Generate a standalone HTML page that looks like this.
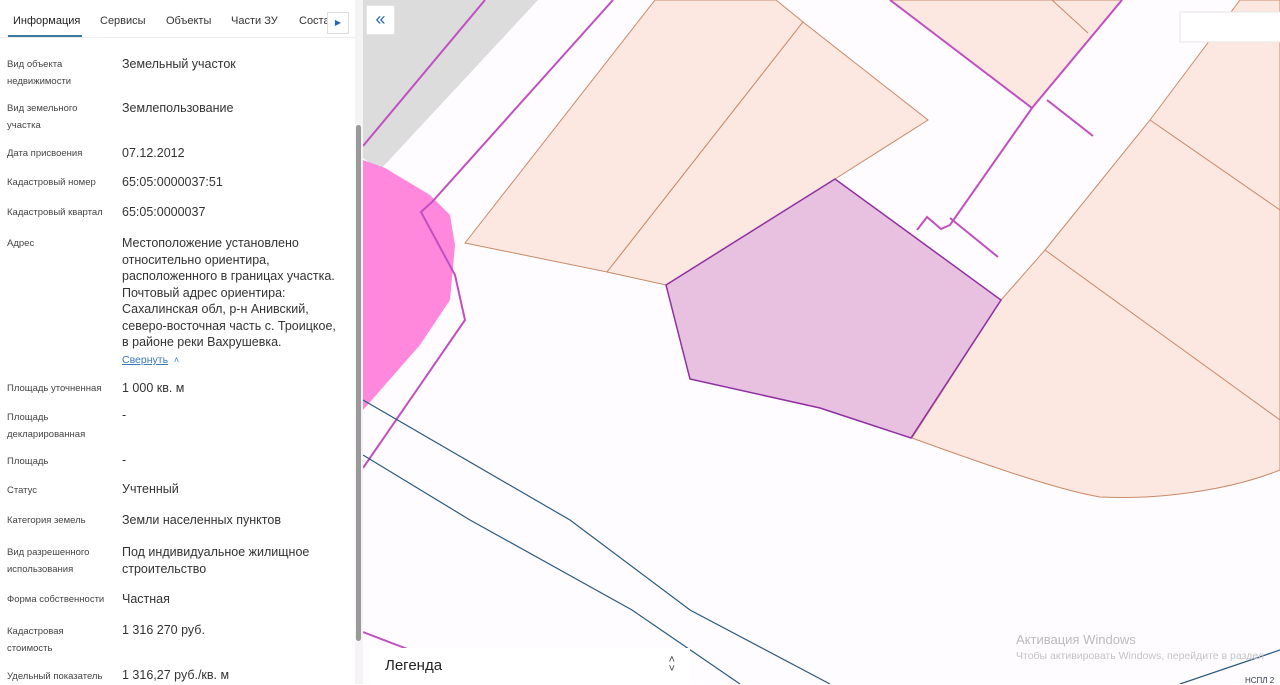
<!DOCTYPE html>
<html><head><meta charset="utf-8"><style>
*{margin:0;padding:0;box-sizing:border-box}
body{width:1280px;height:684px;overflow:hidden;position:relative;background:#fff;font-family:"Liberation Sans",sans-serif}
#panel{position:absolute;left:0;top:0;width:363px;height:684px;background:#fff}
.tab{position:absolute;top:15px;font-size:11px;color:#333}
.l{position:absolute;left:7px;font-size:9.5px;color:#444;line-height:17px}
.v{position:absolute;left:122px;font-size:12.5px;color:#333;line-height:16.5px}
</style></head><body>
<svg style="position:absolute;left:0;top:0" width="1280" height="684">
<rect x="363" y="0" width="917" height="684" fill="#fefcfe"/>
<polygon points="363,0 538,0 380,170 363,158" fill="#dcdcdc"/>
<g fill="#fce8e0" stroke="#c98a6a" stroke-width="1">
<polygon points="465,243 607,272 803,22 776,0 655,0"/>
<polygon points="607,272 666,285 835,179 928,120 803,22"/>
<polygon points="890,0 1032,108 1122,0"/>
<path d="M912,438 L1001,300 L1045,250 L1150,120 L1240,0 L1280,0 L1280,470 C1230,490 1160,500 1100,497 C1060,490 1000,470 912,438 Z"/>
</g>
<g stroke="#c98a6a" stroke-width="1" fill="none"><path d="M1150,120 L1280,210"/><path d="M1045,250 L1280,420"/><path d="M1052,0 L1088,33"/></g>
<polygon points="363,160 385,168 430,195 450,215 455,245 450,300 420,345 363,410" fill="#ff88dd"/>
<g stroke="#c050c0" stroke-width="2" fill="none">
<path d="M363,146 L485,0"/><path d="M613,0 L432,202 L421,212 L455,275 L465,320 L363,468"/>
<path d="M890,0 L1032,108"/><path d="M1122,0 L1032,108 L950,225 L941,229 L927,217 L917,230"/><path d="M950,218 L998,257"/><path d="M1047,100 L1093,136"/>
<path d="M363,632 L410,650"/>
</g>
<polygon points="666,285 835,179 1001,300 911,438 820,408 690,379" fill="#e8c0e0" stroke="#9030a0" stroke-width="1.5"/>
<g stroke="#2a5a80" stroke-width="1.2" fill="none">
<path d="M363,400 L570,520 L690,610 L830,684"/><path d="M363,455 L470,520 L632,610 L740,684"/><path d="M1180,684 L1280,650"/>
</g>
<rect x="1180" y="12" width="110" height="30" fill="#fff" stroke="#e5e5e5"/>
<rect x="1240" y="676" width="40" height="8" fill="#fff"/>
</svg>
<div style="position:absolute;left:366px;top:5px;width:29px;height:30px;background:#fff;border:1px solid #e5e5e5;color:#2a6aa8;font-size:18px;text-align:center;line-height:26px">«</div>
<div style="position:absolute;left:370px;top:648px;width:320px;height:36px;background:#fff;font-size:15px;color:#222;padding:9px 15px">Легенда<span style="position:absolute;right:15px;top:8px;font-size:11px;line-height:9px;color:#444">˄<br>˅</span></div>
<div style="position:absolute;left:1016px;top:632px;font-size:13px;color:#bbb">Активация Windows</div>
<div style="position:absolute;left:1016px;top:650px;font-size:10.5px;color:#c4c4c4;white-space:nowrap">Чтобы активировать Windows, перейдите в раздел</div>
<div style="position:absolute;left:1245px;top:676px;font-size:8px;color:#335">НСПЛ 2</div>
<div id="panel">
<div class="tab" style="left:13px;color:#222">Информация</div>
<div class="tab" style="left:100px">Сервисы</div>
<div class="tab" style="left:166px">Объекты</div>
<div class="tab" style="left:231px">Части ЗУ</div>
<div class="tab" style="left:299px">Соста</div>
<div style="position:absolute;left:8px;top:35px;width:74px;height:2px;background:#3a7aa0"></div>
<div style="position:absolute;left:0;top:37px;width:355px;height:1px;background:#eee"></div>
<div style="position:absolute;left:327px;top:12px;width:22px;height:22px;background:#fff;border:1px solid #ddd;color:#2a6aa8;font-size:8px;text-align:center;line-height:20px">▶</div>
<div style="position:absolute;left:355px;top:0;width:8px;height:684px;background:#f4f4f4"></div>
<div style="position:absolute;left:356px;top:125px;width:5px;height:516px;background:#999;border-radius:3px"></div>
<div class="l" style="top:56px">Вид объекта<br>недвижимости</div><div class="v" style="top:56px">Земельный участок</div>
<div class="l" style="top:100px">Вид земельного<br>участка</div><div class="v" style="top:100px">Землепользование</div>
<div class="l" style="top:145px">Дата присвоения</div><div class="v" style="top:145px">07.12.2012</div>
<div class="l" style="top:174px">Кадастровый номер</div><div class="v" style="top:174px">65:05:0000037:51</div>
<div class="l" style="top:204px">Кадастровый квартал</div><div class="v" style="top:204px">65:05:0000037</div>
<div class="l" style="top:235px">Адрес</div><div class="v" style="top:235px">Местоположение установлено<br>относительно ориентира,<br>расположенного в границах участка.<br>Почтовый адрес ориентира:<br>Сахалинская обл, р-н Анивский,<br>северо-восточная часть с. Троицкое,<br>в районе реки Вахрушевка.</div>
<div class="v" style="top:352px;font-size:10.5px;color:#3a7ab8"><u>Свернуть</u> &nbsp;<span style="font-size:9px">˄</span></div>
<div class="l" style="top:380px">Площадь уточненная</div><div class="v" style="top:380px">1 000 кв. м</div>
<div class="l" style="top:409px">Площадь<br>декларированная</div><div class="v" style="top:407px">-</div>
<div class="l" style="top:453px">Площадь</div><div class="v" style="top:452px">-</div>
<div class="l" style="top:482px">Статус</div><div class="v" style="top:481px">Учтенный</div>
<div class="l" style="top:512px">Категория земель</div><div class="v" style="top:512px">Земли населенных пунктов</div>
<div class="l" style="top:544px">Вид разрешенного<br>использования</div><div class="v" style="top:544px">Под индивидуальное жилищное<br>строительство</div>
<div class="l" style="top:591px">Форма собственности</div><div class="v" style="top:591px">Частная</div>
<div class="l" style="top:623px">Кадастровая<br>стоимость</div><div class="v" style="top:622px">1 316 270 руб.</div>
<div class="l" style="top:668px">Удельный показатель</div><div class="v" style="top:667px">1 316,27 руб./кв. м</div>
</div>
</body></html>
